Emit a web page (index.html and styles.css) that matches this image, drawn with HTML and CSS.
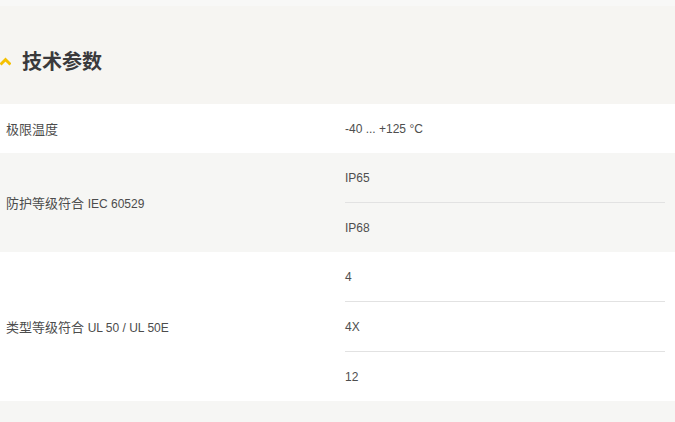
FILE: index.html
```html
<!DOCTYPE html>
<html lang="zh">
<head>
<meta charset="utf-8">
<title>技术参数</title>
<link rel="stylesheet" href="styles.css">
</head>
<body>
<div class="top-strip"></div>
<section class="specs">
  <h2 class="specs-title">
    <svg class="chevron" width="11" height="10" viewBox="0 0 11 10" aria-hidden="true">
      <path d="M0.5 8.5 L5.5 3.5 L10.5 8.5" fill="none" stroke="#f5c000" stroke-width="3"/>
    </svg>
    <span>技术参数</span>
  </h2>
  <div class="spec-table">
    <div class="spec-row">
      <div class="spec-label">极限温度</div>
      <div class="spec-values">
        <div class="spec-value">-40 ... +125 °C</div>
      </div>
    </div>
    <div class="spec-row alt">
      <div class="spec-label">防护等级符合 <span class="latin">IEC 60529</span></div>
      <div class="spec-values">
        <div class="spec-value">IP65</div>
        <div class="spec-value">IP68</div>
      </div>
    </div>
    <div class="spec-row">
      <div class="spec-label">类型等级符合 <span class="latin">UL 50 / UL 50E</span></div>
      <div class="spec-values">
        <div class="spec-value">4</div>
        <div class="spec-value">4X</div>
        <div class="spec-value">12</div>
      </div>
    </div>
    <div class="spec-row alt">
      <div class="spec-label"></div>
      <div class="spec-values">
        <div class="spec-value"></div>
      </div>
    </div>
  </div>
</section>
</body>
</html>
```
FILE: styles.css
```css
html, body {
  margin: 0;
  padding: 0;
}
body {
  background: #f6f5f2;
  font-family: "Liberation Sans", "Noto Sans CJK SC", sans-serif;
  color: #4a4a4a;
  font-size: 12px;
}
.top-strip {
  height: 6px;
  background: #f8f8f7;
}
.specs {
  background: #f6f5f2;
}
.specs-title {
  margin: 0;
  height: 98px;
  padding-top: 10px;
  box-sizing: border-box;
  display: flex;
  align-items: center;
  gap: 11px;
  font-size: 20px;
  font-weight: bold;
  color: #3a3a3c;
  font-family: "Noto Sans CJK SC", sans-serif;
}
.chevron {
  display: block;
  margin-top: 1px;
}
.spec-row {
  display: flex;
  align-items: center;
  background: #ffffff;
}
.spec-row.alt {
  background: #f6f6f4;
}
.spec-label {
  width: 339px;
  padding-left: 6px;
  font-size: 13px;
  color: #4c4c4c;
}
.latin {
  font-size: 12px;
}
.spec-values {
  width: 320px;
  display: flex;
  flex-direction: column;
}
.spec-value {
  height: 49px;
  display: flex;
  align-items: center;
  font-size: 12px;
  color: #4e4e4e;
}
.spec-value + .spec-value {
  border-top: 1px solid #e2e2e2;
}
```
